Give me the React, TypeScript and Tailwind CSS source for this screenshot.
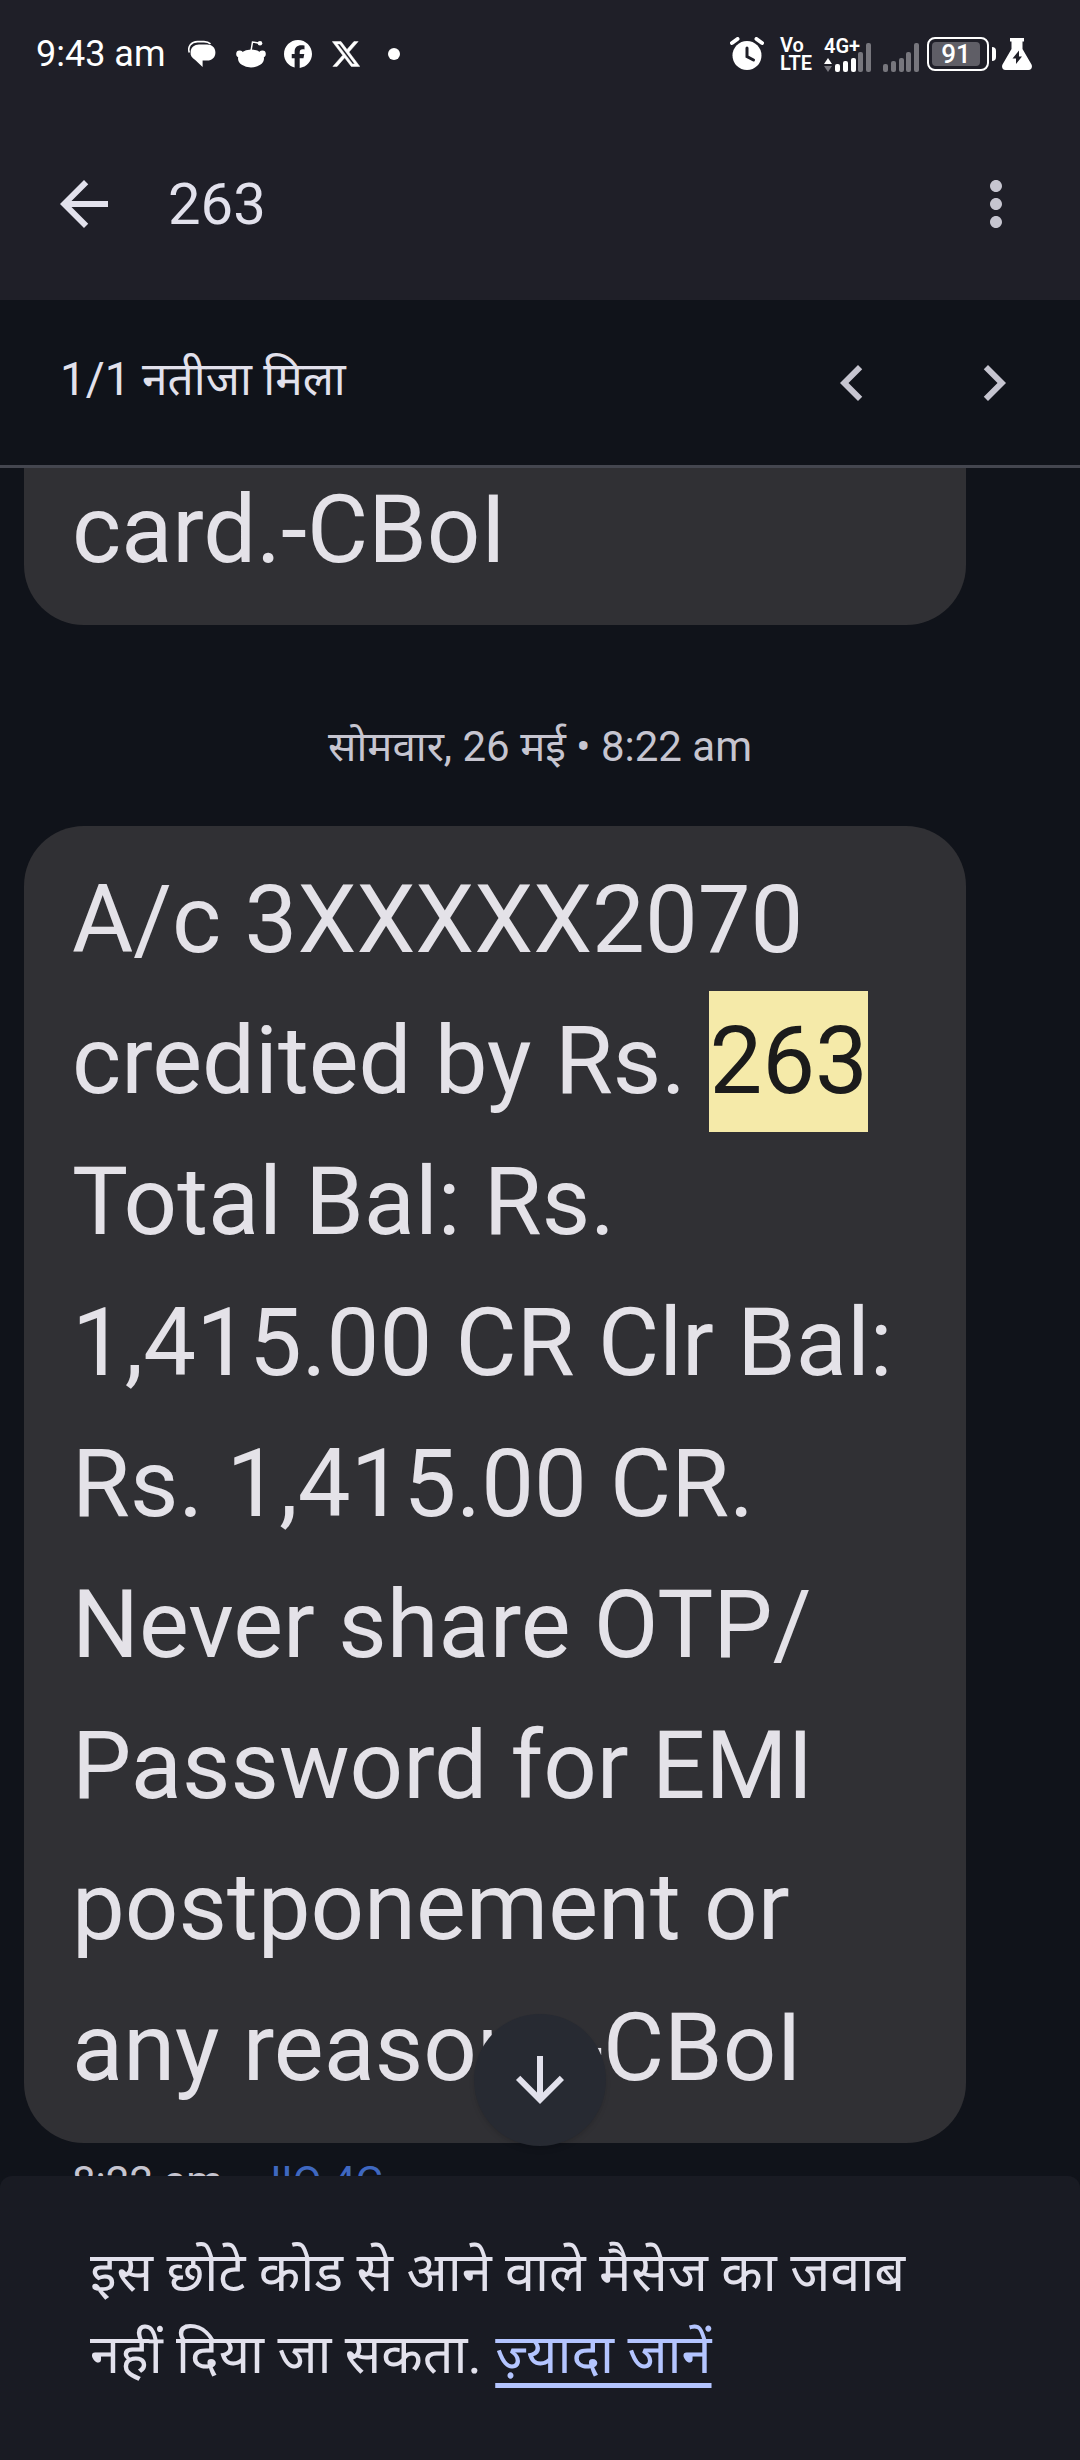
import { FaFacebook } from "react-icons/fa6";
import {
    MdArrowBack,
    MdArrowDownward,
    MdChevronLeft,
    MdChevronRight,
    MdMoreVert
} from "react-icons/md";

const SignalBars = ({ active = 0 }: { active?: number }) => {
    const bars = [
        { x: 0, h: 8 },
        { x: 8, h: 11 },
        { x: 16, h: 14 },
        { x: 23, h: 20 },
        { x: 31, h: 29 },
    ];

    return (
        <svg viewBox="0 0 36 29" className="h-[29px] w-9" aria-hidden="true">
            {bars.map((bar, i) => (
                <rect
                    key={bar.x}
                    x={bar.x}
                    y={29 - bar.h}
                    width="5"
                    height={bar.h}
                    rx="2"
                    fill={i < active ? "#ffffff" : "#77767d"}
                />
            ))}
        </svg>
    );
};

const StatusBar = () => (
    <div className="flex h-[108px] items-center justify-between pl-9 pr-12 text-white">
        {/* Clock and notifications */}
        <div className="flex items-center">
            <span className="mr-[22px] text-[36px] leading-10">9:43 am</span>
            <svg viewBox="0 0 28 28" className="mr-5 h-7 w-7" fill="currentColor" aria-hidden="true">
                <path d="M1.300 12.500C-.8 6 3.500 1.800 9.500 1.600H16C19 1.700 21 2.500 22.500 3.800" fill="none" stroke="currentColor" strokeWidth="1.600" />
                <path d="M11 4.600h8c5 0 8.400 3.300 8.400 7.800 0 4.800-3.200 8-8.400 8.200h-4.400V27L7.200 20C3.800 17.800 2.200 15.500 2.600 12 3 7.500 6.300 4.600 11 4.600z" />
            </svg>
            <svg viewBox="0 0 30 28" className="mr-[18px] h-7 w-[30px]" fill="currentColor" aria-hidden="true">
                <ellipse cx="15" cy="18.500" rx="13" ry="9" />
                <circle cx="3.600" cy="14" r="3.400" />
                <circle cx="26.400" cy="14" r="3.400" />
                <circle cx="24" cy="3.200" r="2.300" />
                <path d="M15 11L16.500 2L24 3.200" fill="none" stroke="currentColor" strokeWidth="1.500" />
            </svg>
            <FaFacebook className="mr-5 h-7 w-7" />
            <svg viewBox="1 2 22 20" className="mr-7 h-7 w-7" fill="currentColor" stroke="currentColor" strokeWidth=".4" aria-hidden="true">
                <path d="M18.244 2.25h3.308l-7.227 8.26 8.502 11.24H16.17l-5.214-6.817L4.99 21.75H1.68l7.73-8.835L1.254 2.25H8.08l4.713 6.231zm-1.161 17.52h1.833L7.084 4.126H5.117z" />
            </svg>
            <span className="h-3 w-3 rounded-full bg-white" />
        </div>

        {/* System indicators */}
        <div className="flex items-center">
            <svg viewBox="0 0 34 34" className="mr-4 h-[34px] w-[34px]" aria-hidden="true">
                <circle cx="17" cy="18.500" r="14.500" fill="#fff" />
                <path d="M2 6L7.500 2M32 6L26.500 2" stroke="#fff" strokeWidth="4" strokeLinecap="round" />
                <path d="M17 11v8.500l6.500 3.500" fill="none" stroke="#1f1f28" strokeWidth="3" strokeLinecap="round" />
            </svg>
            <div className="mr-3 flex w-8 flex-col text-[20px] font-semibold leading-[18px]">
                <span>Vo</span>
                <span>LTE</span>
            </div>
            <div className="relative mr-3 flex h-9 w-[47px] items-end justify-end">
                <span className="absolute left-0 top-0 text-[20px] font-semibold leading-5">4G+</span>
                <svg viewBox="0 0 8 14" className="h-3.5 w-2" aria-hidden="true">
                    <path d="M4 0L8 6H0z" fill="#fff" />
                    <path d="M4 14L0 8h8z" fill="#77767d" />
                </svg>
                <span className="w-[3px]" />
                <SignalBars active={3} />
            </div>
            <div className="mr-2 flex h-9 items-end">
                <SignalBars />
            </div>
            <div className="flex items-center gap-[3px]">
                <div className="flex h-[34px] w-[62px] items-center rounded-lg border-2 border-white p-[3px]">
                    <span className="flex h-6 w-12 items-center justify-center rounded bg-[#5f5e66] text-[26px] font-medium leading-6">
                        91
                    </span>
                </div>
                <span className="h-3.5 w-1 rounded-r bg-white" />
            </div>
            <svg viewBox="0 0 30 32" className="ml-1.5 h-8 w-[30px]" aria-hidden="true">
                <path d="M8 0h14v3.500h-1.500V11l9 15.500c1.200 2.800 0 5.500-3 5.500h-23c-3 0-4.200-2.700-3-5.500L9.500 11V3.500H8z" fill="#fff" />
                <path d="M17 12.500L10.500 20.500H14V26l6-7.500h-3z" fill="#1f1f28" />
            </svg>
        </div>
    </div>
);

const AppBar = () => (
    <div className="flex h-48 items-center justify-between px-12">
        <div className="flex items-center gap-12">
            <button type="button" aria-label="वापस जाएं" className="text-[#e2e1ec]">
                <MdArrowBack className="h-[72px] w-[72px]" />
            </button>
            <h1 className="text-[58px] leading-[72px] text-[#e2e1ec]">263</h1>
        </div>
        <button type="button" aria-label="ज़्यादा विकल्प" className="text-[#c6c5d0]">
            <MdMoreVert className="h-[72px] w-[72px]" />
        </button>
    </div>
);

const SearchResultBar = () => (
    <div className="flex h-[168px] flex-none items-center justify-between border-b-[3px] border-[#44464f] pl-[60px] pr-[50px]">
        <p className="pb-2 text-[46px] leading-[60px] text-[#e2e1ec]">1/1 नतीजा मिला</p>
        <div className="flex gap-[70px] text-[#c6c5d0]">
            <button type="button" aria-label="पिछला नतीजा">
                <MdChevronLeft className="h-[72px] w-[72px]" />
            </button>
            <button type="button" aria-label="अगला नतीजा">
                <MdChevronRight className="h-[72px] w-[72px]" />
            </button>
        </div>
    </div>
);

export default function App() {
    return (
        <div className="flex h-screen flex-col bg-[#10131a] font-[Roboto,'Noto_Sans_Devanagari','Noto_Sans',sans-serif]">
            <header className="flex-none bg-[#1f1f28]">
                <StatusBar />
                <AppBar />
            </header>
            <SearchResultBar />

            {/* Conversation */}
            <div className="relative min-h-0 flex-1">
                <main className="h-full overflow-hidden pl-6 pr-[114px] text-[#e4e2e8]">
                    <div className="-mt-2 rounded-b-[60px] bg-[#303034] px-12 pb-6">
                        <p className="text-[94px] leading-[141px]">card.-CBoI</p>
                    </div>
                    <p className="-mr-[90px] flex h-[201px] items-center justify-center pt-[42px] text-[42px] leading-[60px] text-[#c6c5d0]">
                        सोमवार, 26 मई • 8:22 am
                    </p>
                    <div className="rounded-[60px] bg-[#303034] px-12 py-6">
                        <p className="text-[94px] leading-[141px]">
                            A/c 3XXXXX2070 credited by Rs.{" "}
                            <mark className="inline-block bg-[#f5eaa9] text-[#1b1b1b]">263</mark>{" "}
                            Total Bal: Rs. 1,415.00 CR Clr Bal: Rs. 1,415.00 CR. Never share OTP/
                            <wbr />
                            Password for EMI postponement or any reason. <span className="whitespace-nowrap">-CBoI</span>
                        </p>
                    </div>
                    <p className="px-12 pt-3 text-[42px] leading-[54px] text-[#c6c5d0]">
                        8:22 am • <span className="text-[#3f68c0]">JIO 4G</span>
                    </p>
                </main>
                <button
                    type="button"
                    aria-label="नीचे जाएं"
                    className="absolute bottom-[30px] left-1/2 flex h-[132px] w-[132px] -translate-x-1/2 items-center justify-center rounded-full bg-[#272a32] text-[#e2e1ec] shadow-md"
                >
                    <MdArrowDownward className="h-[72px] w-[72px]" />
                </button>
            </div>

            <footer className="flex-none rounded-t-xl bg-[#191b23] px-[90px] pb-16 pt-14">
                <p className="text-[54px] leading-[82px] text-[#e2e1ec]">
                    इस छोटे कोड से आने वाले मैसेज का जवाब नहीं दिया जा सकता.{" "}
                    <a href="#" className="text-[#b4c5ff] underline decoration-[5px] underline-offset-[10px]">
                        ज़्यादा जानें
                    </a>
                </p>
            </footer>
        </div>
    );
}
